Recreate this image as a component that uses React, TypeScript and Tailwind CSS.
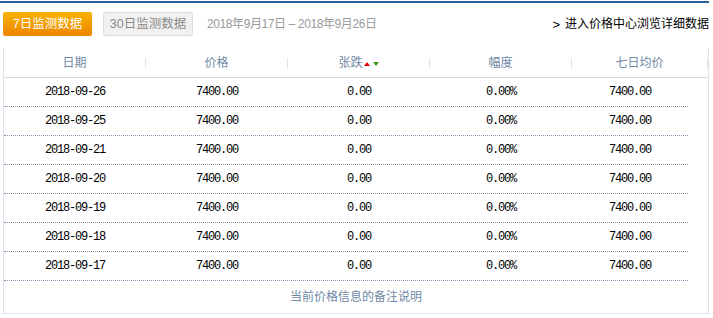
import React from 'react';

const rows = [
  '2018-09-26',
  '2018-09-25',
  '2018-09-21',
  '2018-09-20',
  '2018-09-19',
  '2018-09-18',
  '2018-09-17',
];

const cjk = "font-['Liberation_Sans','Noto_Sans_CJK_SC',sans-serif]";
const mono = "font-['Liberation_Mono','Noto_Sans_CJK_SC',monospace]";

const HeaderCell: React.FC<{ w: string; children: React.ReactNode }> = ({ w, children }) => (
  <div className={`${w} h-full flex items-center`}>
    <div className="flex-1 flex items-center justify-center">{children}</div>
    <div className="w-px h-[10px] bg-[#e2e2e2]" />
  </div>
);

export default function App() {
  return (
    <div className={`w-[713px] h-[318px] bg-white pt-px ${cjk}`}>
      <div className="w-[709px] border-t-2 border-[#2d5e9c]">
        {/* Toolbar */}
        <div className="h-[45px] pt-[9px] pl-[3px] flex items-start">
          <div className="h-6 flex items-center w-full">
            <button className="w-[89px] h-6 rounded-[2px] bg-gradient-to-b from-[#f6b300] to-[#ee8400] text-white text-[12.5px] leading-none">
              7日监测数据
            </button>
            <button className="ml-[11px] w-[90px] h-6 rounded-[2px] border border-[#dcdcdc] bg-[#f1f1f1] text-[#8a8a8a] text-[12.5px] leading-none">
              30日监测数据
            </button>
            <span className="ml-[14px] text-[12px] text-[#9a9a9a] tracking-[-0.4px]">
              2018年9月17日 – 2018年9月26日
            </span>
            <a className="ml-auto text-[12px] text-black flex items-center gap-[5px]">
              <span className="text-[13px] leading-none">&gt;</span>
              进入价格中心浏览详细数据
            </a>
          </div>
        </div>

        {/* Table box */}
        <div className="ml-[3px] w-[706px] border-x border-b border-[#dde4ec]">
          <div className="h-[30px] flex border-b border-[#d6dce6] overflow-hidden text-[12px] text-[#6f88a4]">
            <HeaderCell w="w-[142px]">日期</HeaderCell>
            <HeaderCell w="w-[142px]">价格</HeaderCell>
            <HeaderCell w="w-[142px]">
              <span>张跌</span>
              <span className="ml-px w-0 h-0 border-x-[3.5px] border-x-transparent border-b-[4px] border-b-[#e60000] mt-[3px]" />
              <span className="ml-[3px] w-0 h-0 border-x-[3.5px] border-x-transparent border-t-[4px] border-t-[#3c9a1e] mt-[3px]" />
            </HeaderCell>
            <HeaderCell w="w-[142px]">幅度</HeaderCell>
            <HeaderCell w="w-[136px]">七日均价</HeaderCell>
          </div>

          <div className={`w-[684px] text-[12px] text-black tracking-[-1.2px] ${mono}`}>
            {rows.map((d) => (
              <div key={d} className="h-[29px] flex items-center border-b border-dotted border-[#7f95ad]">
                <div className="w-[142px] text-center">{d}</div>
                <div className="w-[142px] text-center">7400.00</div>
                <div className="w-[142px] text-center">0.00</div>
                <div className="w-[142px] text-center">0.00%</div>
                <div className="w-[116px] text-center">7400.00</div>
              </div>
            ))}
          </div>

          <div className="h-[32px] flex items-center justify-center text-[12px] text-[#6f88a4]">
            当前价格信息的备注说明
          </div>
        </div>
      </div>
    </div>
  );
}
